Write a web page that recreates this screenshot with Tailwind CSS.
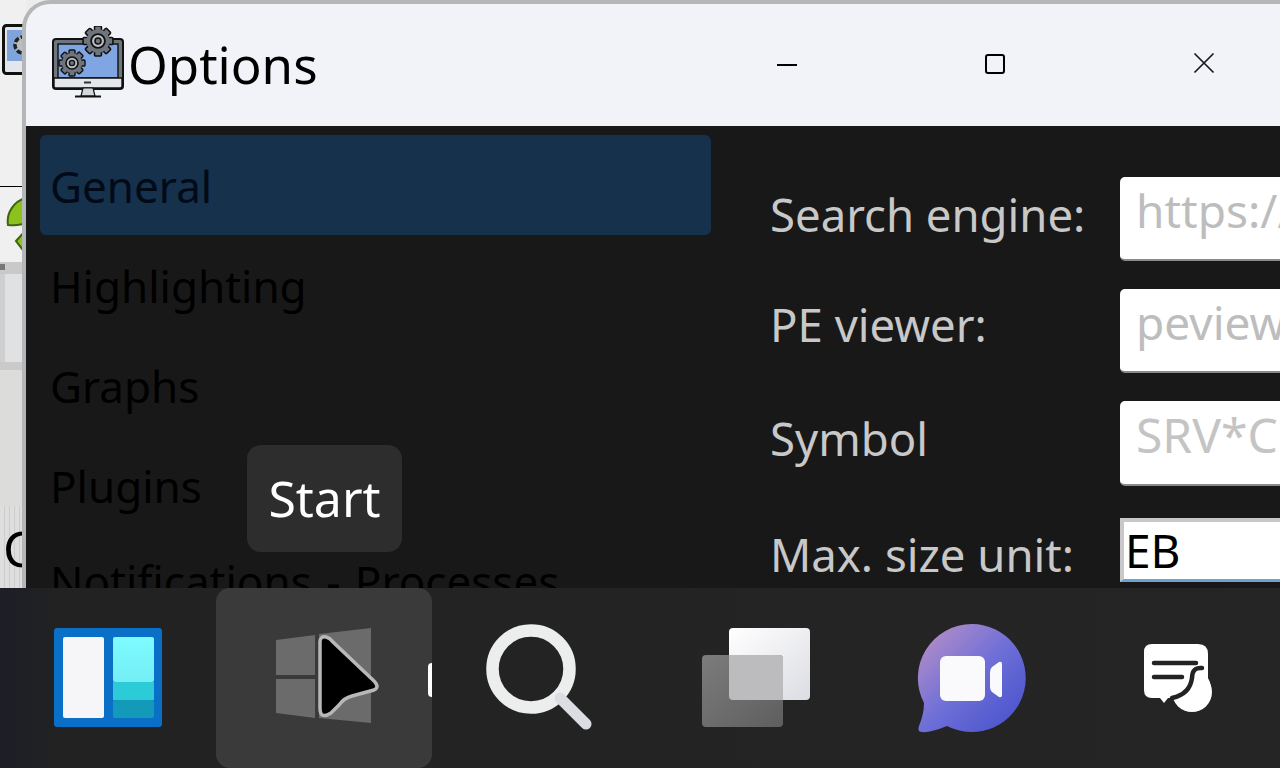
<!DOCTYPE html>
<html lang="en">
<head>
  <meta charset="UTF-8">
  <meta name="viewport" content="width=device-width, initial-scale=1.0">
  <title>Options</title>
  <script src="https://cdn.jsdelivr.net/npm/@tailwindcss/browser@4"></script>
</head>
<body class="bg-[#ececec] font-['Noto_Sans','Open_Sans',sans-serif]">

<div class="relative w-[1280px] h-[768px] overflow-hidden">

  <!-- window behind -->
  <div class="absolute left-0 top-0 w-[26px] h-[588px] overflow-hidden bg-[#f0f0f0]">
    <svg class="absolute left-[2px] top-[24px]" width="26" height="52" viewBox="0 0 26 52">
      <rect x="1.500" y="1.500" width="30" height="48" rx="3" fill="#e3e6ea" stroke="#111" stroke-width="3"/>
      <rect x="5" y="6" width="24" height="31" fill="#7fa4dc"/>
      <circle cx="21" cy="21" r="8" fill="#b9bec4" stroke="#222" stroke-width="3.500" stroke-dasharray="5 2"/>
    </svg>
    <div class="absolute left-0 top-[186px] w-full h-px bg-black"></div>
    <svg class="absolute left-0 top-[195px]" width="26" height="62" viewBox="0 0 26 62">
      <path d="M8 30 C6 18 14 6 26 3 V28 Q20 31 8 30Z" fill="#8cc21c" stroke="#3f6410" stroke-width="2"/>
      <path d="M16 46 L26 35 V59Z" fill="#8cc21c" stroke="#3f6410" stroke-width="2"/>
    </svg>
    <div class="absolute left-0 top-[262px] w-full h-[12px] bg-[#c9c9c9]"></div>
    <div class="absolute left-0 top-[264px] w-[5px] h-[6px] bg-[#777]"></div>
    <div class="absolute left-0 top-[274px] w-full h-[90px] bg-[#dfe1e3]"></div>
    <div class="absolute left-0 top-[274px] w-[5px] h-[90px] bg-[#cfcfcf]"></div>
    <div class="absolute left-0 top-[362px] w-full h-[8px] bg-[#c9cac9]"></div>
    <div class="absolute left-0 top-[370px] w-full h-[136px] bg-[#dcdcdb]"></div>
    <div class="absolute left-0 top-[506px] w-full h-[82px] bg-[repeating-linear-gradient(90deg,#dedede_0_4px,#cccccc_4px_5px)]"></div>
    <span class="absolute left-[3px] top-[514px] text-[50px] leading-[68px] text-black">C</span>
  </div>

  <!-- options window -->
  <div class="absolute left-[22px] top-0 w-[1270px] h-[602px] rounded-tl-[28px] border-l-4 border-t-4 border-[#b5b6b8] bg-[#f2f3f8] overflow-hidden">
    <!-- title bar -->
    <div class="flex items-center h-[122px] pl-[25px]">
      <svg class="-mt-[4px] shrink-0" width="76" height="74" viewBox="0 0 76 74">
        <defs>
          <g id="gear">
            <rect x="-3" y="-13" width="6" height="26" rx="1" fill="#6f757c" stroke="#111" stroke-width="1.400"/>
            <rect x="-3" y="-13" width="6" height="26" rx="1" fill="#6f757c" stroke="#111" stroke-width="1.400" transform="rotate(45)"/>
            <rect x="-3" y="-13" width="6" height="26" rx="1" fill="#6f757c" stroke="#111" stroke-width="1.400" transform="rotate(90)"/>
            <rect x="-3" y="-13" width="6" height="26" rx="1" fill="#6f757c" stroke="#111" stroke-width="1.400" transform="rotate(135)"/>
            <circle r="10" fill="#6f757c"/>
            <circle r="6" fill="#b9bec4" stroke="#111" stroke-width="1.600"/>
            <circle r="2.600" fill="#6f757c" stroke="#111" stroke-width="1.400"/>
          </g>
        </defs>
        <rect x="2" y="13" width="70" height="50" rx="3" fill="#6f757c" stroke="#111" stroke-width="2"/>
        <rect x="7" y="18" width="60" height="34" fill="#7fa6e2" stroke="#111" stroke-width="1.400"/>
        <path d="M3 52H71V60Q71 62 69 62H5Q3 62 3 60Z" fill="#e4e7ea" stroke="#111" stroke-width="1.400"/>
        <rect x="33" y="55.500" width="7" height="2" fill="#333"/>
        <path d="M32 62H42L44 70H30Z" fill="#d4d7da" stroke="#111" stroke-width="1.200"/>
        <path d="M24 70.500H50" stroke="#111" stroke-width="2"/>
        <use href="#gear" x="21" y="37"/>
        <use href="#gear" transform="translate(47 15) scale(1.150)"/>
      </svg>
      <span class="ml-[1px] -mt-[1px] text-[51px] leading-none text-black">Options</span>
      <div class="absolute left-[751px] top-[60px] w-[20px] h-[2px] bg-black"></div>
      <div class="absolute left-[959px] top-[50px] w-[20px] h-[20px] rounded-[3px] border-2 border-black"></div>
      <svg class="absolute left-[1167px] top-[48px]" width="22" height="22" viewBox="0 0 22 22"><path d="M1.500 1.500L20.500 20.500M20.500 1.500L1.500 20.500" stroke="#1a1a1a" stroke-width="1.700"/></svg>
    </div>
    <!-- body -->
    <div class="flex h-[476px] bg-[#181818]">
      <ul class="w-[671px] ml-[14px] mt-[9px] shrink-0 text-[44px] text-black">
        <li class="h-[100px] flex items-center pl-[10px] pt-[2px] rounded-[6px] bg-[#15314b] text-[#020a18]">General</li>
        <li class="h-[100px] flex items-center pl-[10px] pt-[2px]">Highlighting</li>
        <li class="h-[100px] flex items-center pl-[10px] pt-[2px]">Graphs</li>
        <li class="h-[100px] flex items-center pl-[10px] pt-[2px]">Plugins</li>
        <li class="h-[100px] flex items-center pl-[10px] pb-[8px] whitespace-nowrap [word-spacing:3px]">Notifications - Processes</li>
      </ul>
      <div class="ml-[59px] mt-[51px] flex flex-col text-[45.500px] text-[#c8c8c8]">
        <div class="flex items-center h-[84px] mb-[28px]">
          <span class="w-[350px] -mt-[10px]">Search engine:</span>
          <span class="w-[300px] h-full pl-[16px] pb-[16px] flex items-center bg-white rounded-[5px] border-b-2 border-[#8a8a8a] text-[46px] text-[#bdbdbd]">https://</span>
        </div>
        <div class="flex items-center h-[84px] mb-[28px]">
          <span class="w-[350px] -mt-[14px]">PE viewer:</span>
          <span class="w-[300px] h-full pl-[16px] pb-[16px] flex items-center bg-white rounded-[5px] border-b-2 border-[#8a8a8a] text-[46px] text-[#bdbdbd]">peview</span>
        </div>
        <div class="flex items-center h-[85px] mb-[32px]">
          <span class="w-[350px] -mt-[10px]">Symbol</span>
          <span class="w-[300px] h-full pl-[16px] pb-[16px] flex items-center bg-white rounded-[5px] border-b-2 border-[#8a8a8a] text-[48px] text-[#c4c4c4]">SRV*C</span>
        </div>
        <div class="flex items-center h-[64px]">
          <span class="w-[350px] mt-[8px]">Max. size unit:</span>
          <span class="w-[300px] h-full pl-[1px] flex items-center bg-white border-l-4 border-t-4 border-[#c8c8c8] border-b-[3px] border-b-[#6ea3cf] text-[46px] text-black">EB</span>
        </div>
      </div>
    </div>
  </div>

  <!-- tooltip -->
  <div class="absolute left-[247px] top-[445px] w-[155px] h-[107px] flex items-center justify-center rounded-[14px] bg-[#2d2d2d] text-white text-[50px]">Start</div>

  <!-- taskbar -->
  <div class="absolute left-0 top-[588px] w-full h-[180px] bg-[#212121] bg-gradient-to-r from-[#1d1e26] via-[#222222] via-[5%] to-[#252525] flex items-center">
    <svg class="absolute left-[54px] top-[40px]" width="108" height="99" viewBox="0 0 108 99">
      <defs>
        <linearGradient id="cyan" x1="0" y1="0" x2="0" y2="1"><stop offset="0" stop-color="#7dfcff"/><stop offset="1" stop-color="#74eef5"/></linearGradient>
      </defs>
      <rect width="108" height="99" rx="3" fill="#0a6fc7"/>
      <rect x="9" y="9" width="41" height="81" rx="2" fill="#f6f6f8"/>
      <rect x="59" y="9" width="41" height="45" rx="2" fill="url(#cyan)"/>
      <rect x="59" y="54" width="41" height="18" fill="#2ccbd8"/>
      <rect x="59" y="72" width="41" height="18" rx="2" fill="#139ab9"/>
    </svg>

    <!-- start button -->
    <div class="absolute left-[216px] top-0 w-[216px] h-[180px] rounded-[14px] bg-[#3a3a3a]">
      <svg class="absolute left-[58px] top-[40px]" width="110" height="100" viewBox="0 0 110 100">
        <path d="M2 12L41 7V47H2ZM45 6L97 0V47H45ZM2 51H41V90L2 85ZM45 51H97V95L45 90Z" fill="#6b6b6b"/>
        <path d="M46 14Q46 8 52 9Q56 10 58 13L100 53Q106 59 100 62L78 68Q70 70 65 77L57 85Q46 92 46 80Z" fill="#000" stroke="#b8b8b8" stroke-width="3.500"/>
      </svg>
    </div>
    <div class="absolute left-[428px] top-[75px] w-[4px] h-[34px] rounded-l-full bg-white"></div>

    <svg class="absolute left-[484px] top-[34px]" width="110" height="110" viewBox="0 0 110 110">
      <circle cx="47" cy="47" r="38.500" fill="none" stroke="#eceded" stroke-width="12.500"/>
      <path d="M76 76L102 102" stroke="#dcdde2" stroke-width="11" stroke-linecap="round"/>
    </svg>

    <svg class="absolute left-[700px] top-[38px]" width="112" height="102" viewBox="0 0 112 102">
      <defs>
        <linearGradient id="tv1" x1="0" y1="0" x2="1" y2="1"><stop offset="0" stop-color="#ffffff"/><stop offset="1" stop-color="#dcdde3"/></linearGradient>
        <linearGradient id="tv2" x1="0" y1="0" x2="1" y2="1"><stop offset="0" stop-color="#7c7c7c"/><stop offset="1" stop-color="#5e5e5e"/></linearGradient>
      </defs>
      <rect x="29" y="2" width="81" height="72" rx="4" fill="url(#tv1)"/>
      <rect x="2" y="29" width="81" height="72" rx="4" fill="url(#tv2)"/>
      <path d="M33 29H79Q83 29 83 33V74H33Q29 74 29 70V29Z" fill="#bcbcbe"/>
    </svg>

    <svg class="absolute left-[916px] top-[34px]" width="112" height="112" viewBox="0 0 112 112">
      <defs>
        <linearGradient id="meet" x1="0.1" y1="0.1" x2="0.9" y2="0.9"><stop offset="0" stop-color="#b08cc8"/><stop offset="0.5" stop-color="#6f6fd8"/><stop offset="1" stop-color="#4b55cc"/></linearGradient>
      </defs>
      <path d="M56 2A54 54 0 1 1 31 104Q14 111 6 110Q1 110 3 104Q8 92 8 81A54 54 0 0 1 56 2Z" fill="url(#meet)"/>
      <rect x="24" y="34" width="45" height="45" rx="6" fill="#fafafc"/>
      <path d="M74 50Q74 47 76 45L83 40Q86 39 86 42V73Q86 76 83 75L76 70Q74 68 74 65Z" fill="#fafafc"/>
    </svg>

    <svg class="absolute left-[1142px] top-[54px]" width="72" height="72" viewBox="0 0 72 72">
      <path d="M10 2H56Q66 2 66 12V36A18 18 0 0 1 32 56H26L22 61L18 56H10Q2 56 2 48V10Q2 2 10 2Z" fill="#fff"/>
      <circle cx="50" cy="50" r="20" fill="#fff"/>
      <path d="M12 21H54M12 35H40" stroke="#232323" stroke-width="4.500" stroke-linecap="round"/>
      <path d="M60 26Q50 25 50 36Q48 52 30 56" fill="none" stroke="#232323" stroke-width="4.500" stroke-linecap="round"/>
    </svg>
  </div>
</div>

</body>
</html>
